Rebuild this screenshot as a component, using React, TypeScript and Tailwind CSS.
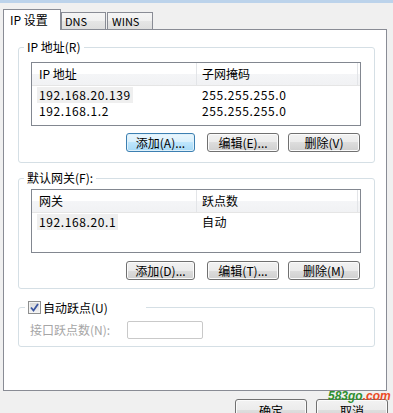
import React from 'react'

interface BtnProps {
  label: string
  width: string
  focus?: boolean
}

function Btn({ label, width, focus }: BtnProps) {
  return (
    <div
      className={`${width} flex h-[19px] items-center justify-center rounded-[3px] border text-[12px] leading-[12px] ${
        focus
          ? 'border-[#3c7fb1] bg-[linear-gradient(to_bottom,#eaf6fd_0%,#d9f0fc_50%,#bee6fd_50%,#a7d9f5_100%)] shadow-[inset_0_0_0_1px_#dff1fb]'
          : 'border-[#707070] bg-[linear-gradient(to_bottom,#f2f2f2_0%,#ebebeb_50%,#dddddd_50%,#cfcfcf_100%)] shadow-[inset_0_0_0_1px_#fbfbfb]'
      }`}
    >
      {label}
    </div>
  )
}

interface ListViewProps {
  cols: [string, string]
  rows: [string, string][]
}

function ListView({ cols, rows }: ListViewProps) {
  return (
    <div className="h-[64px] w-full border border-[#828790] bg-white">
      <div className="flex h-[23px] border-b border-[#e5e5e5] bg-[linear-gradient(to_bottom,#ffffff_0%,#ffffff_50%,#f4f5f7_50%,#f1f2f4_100%)]">
        <div className="w-[165px] border-r border-[#e3e5e8] pl-[7px] leading-[22px]">{cols[0]}</div>
        <div className="w-[161px] border-r border-[#e3e5e8] pl-[5px] leading-[22px]">{cols[1]}</div>
      </div>
      <div className="pt-[1px]">
        {rows.map((row, i) => (
          <div key={i} className="flex h-[16px] leading-[16px] tracking-[0.6px]">
            <div className="w-[165px] pl-[5px]">
              <span className={i === 0 ? 'inline-block bg-[#efefef] px-[2px]' : 'inline-block px-[2px]'}>
                {row[0]}
              </span>
            </div>
            <div className="pl-[5px]">{row[1]}</div>
          </div>
        ))}
      </div>
    </div>
  )
}

export default function App() {
  return (
    <div className="relative h-[413px] w-[393px] overflow-hidden bg-[#f0f0f0] font-['Noto_Sans_CJK_SC','Liberation_Sans',sans-serif] text-[12px] text-black">
      <div className="h-[3px] bg-[#bcd3eb]" />

      {/* tabs */}
      <div className="flex items-end pl-[3px] pt-[6px]">
        <div className="relative z-10 -mb-px h-[21px] w-[58px] border border-b-0 border-[#898c95] bg-white pl-[6px] pt-[3px] leading-[14px]">
          IP 设置
        </div>
        <div className="h-[17px] w-[45px] border border-b-0 border-[#898c95] bg-[linear-gradient(to_bottom,#f5f5f5_0%,#f0f0f0_50%,#e6e6e6_50%,#dedede_100%)] pl-[3px] pt-[2px] text-[11px] leading-[13px]">
          DNS
        </div>
        <div className="ml-px h-[17px] w-[46px] border border-b-0 border-[#898c95] bg-[linear-gradient(to_bottom,#f5f5f5_0%,#f0f0f0_50%,#e6e6e6_50%,#dedede_100%)] pl-[4px] pt-[2px] text-[11px] leading-[13px]">
          WINS
        </div>
      </div>

      {/* panel */}
      <div className="ml-[3px] h-[362px] w-[384px] border border-[#898c95] bg-white pl-[14px] pt-[11px]">
        <fieldset className="w-[357px] rounded-[3px] border border-[#d5dfe5]">
          <legend className="ml-[5px] px-[3px] leading-[12px]">IP 地址(R)</legend>
          <div className="pb-[10px] pl-[12px] pr-[13px] pt-[9px]">
            <ListView
              cols={['IP 地址', '子网掩码']}
              rows={[
                ['192.168.20.139', '255.255.255.0'],
                ['192.168.1.2', '255.255.255.0'],
              ]}
            />
            <div className="mt-[7px] flex justify-end pr-px">
              <Btn label="添加(A)..." width="w-[69px]" focus />
              <div className="ml-[12px]">
                <Btn label="编辑(E)..." width="w-[72px]" />
              </div>
              <div className="ml-[9px]">
                <Btn label="删除(V)" width="w-[72px]" />
              </div>
            </div>
          </div>
        </fieldset>

        <fieldset className="mt-[9px] w-[357px] rounded-[3px] border border-[#d5dfe5]">
          <legend className="ml-[5px] px-[3px] leading-[12px]">默认网关(F):</legend>
          <div className="pb-[8px] pl-[12px] pr-[13px] pt-[5px]">
            <ListView cols={['网关', '跃点数']} rows={[['192.168.20.1', '自动']]} />
            <div className="mt-[8px] flex justify-end pr-px">
              <Btn label="添加(D)..." width="w-[69px]" />
              <div className="ml-[12px]">
                <Btn label="编辑(T)..." width="w-[72px]" />
              </div>
              <div className="ml-[9px]">
                <Btn label="删除(M)" width="w-[72px]" />
              </div>
            </div>
          </div>
        </fieldset>

        <fieldset className="mt-[12px] w-[357px] rounded-[3px] border border-[#d5dfe5]">
          <legend className="ml-[6px] flex w-[121px] items-center pl-[3px]">
            <span className="flex h-[13px] w-[13px] items-center justify-center border border-[#8e8f8f] bg-[linear-gradient(to_bottom,#d6d6d6,#f4f4f4)] shadow-[inset_0_0_0_1px_#f4f4f4]">
              <svg width="9" height="9" viewBox="0 0 9 9">
                <path d="M1 4.5 L3.5 7.5 L8 1" fill="none" stroke="#3a55a0" strokeWidth="1.8" />
              </svg>
            </span>
            <span className="ml-[2px] leading-[13px]">自动跃点(U)</span>
          </legend>
          <div className="flex items-center pb-[7px] pl-[11px] pt-[7px]">
            <span className="w-[97px] leading-[18px] text-[#a6a6a6]">接口跃点数(N):</span>
            <div className="h-[18px] w-[76px] rounded-[2px] border border-[#c9c9c9] bg-white" />
          </div>
        </fieldset>
      </div>

      {/* dialog buttons */}
      <div className="mt-[8px] flex justify-end pr-[5px]">
        <div className="flex h-[23px] w-[72px] items-center justify-center rounded-[3px] border border-[#707070] bg-[linear-gradient(to_bottom,#f2f2f2_0%,#ebebeb_50%,#dddddd_50%,#cfcfcf_100%)] shadow-[inset_0_0_0_1px_#fbfbfb]">
          确定
        </div>
        <div className="ml-[9px] flex h-[23px] w-[72px] items-center justify-center rounded-[3px] border border-[#707070] bg-[linear-gradient(to_bottom,#f2f2f2_0%,#ebebeb_50%,#dddddd_50%,#cfcfcf_100%)] shadow-[inset_0_0_0_1px_#fbfbfb]">
          取消
        </div>
      </div>

      {/* watermark */}
      <div className="absolute left-[328px] top-[390px] font-['Liberation_Sans',sans-serif] text-[12px] font-bold italic leading-[12px]">
        <span className="text-[#2f8f2f]">583go</span>
        <span className="text-[#ec4a26]">.com</span>
      </div>
    </div>
  )
}
